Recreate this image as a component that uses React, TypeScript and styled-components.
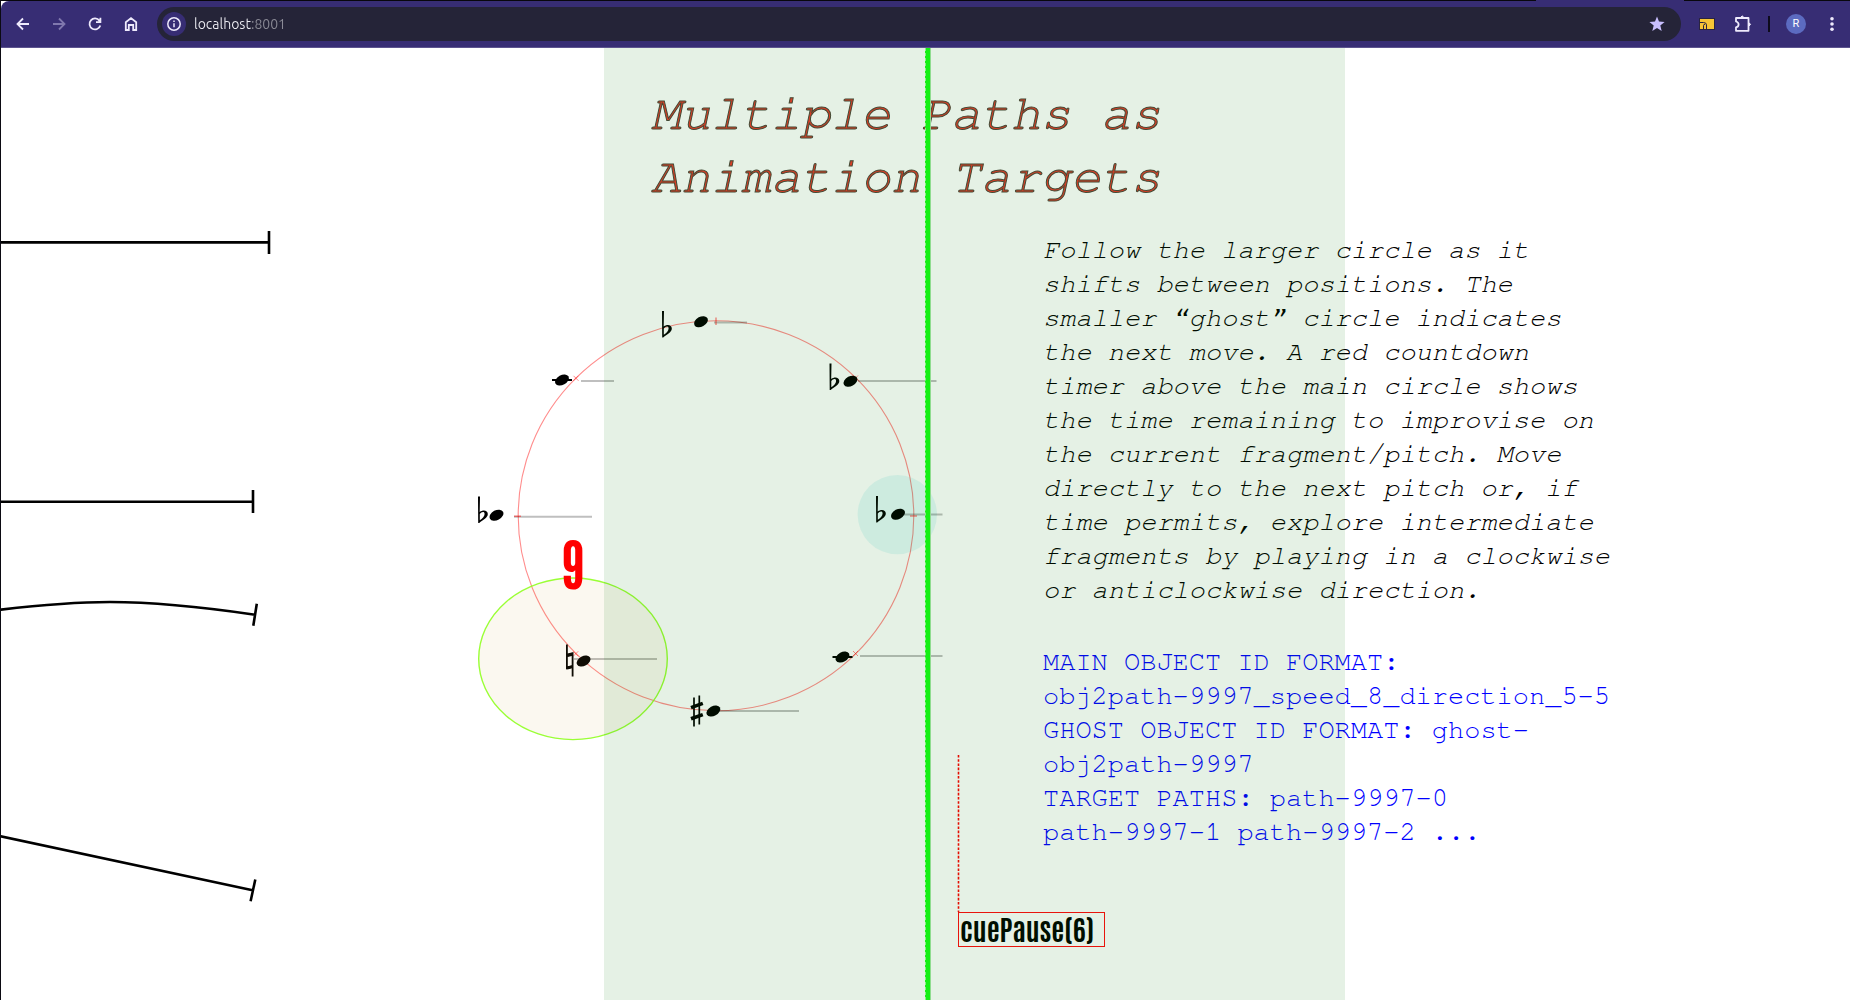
import React from "react";
import styled, { createGlobalStyle } from "styled-components";

const GlobalStyle = createGlobalStyle`
  * { box-sizing: border-box; }
  html, body, #root { height: 100%; }
  body { margin: 0; background: #fff; overflow: hidden; }
`;

const mono = `"Nimbus Mono PS", "FreeMono", "Courier Prime", "Courier 10 Pitch", "Cutive Mono", "Liberation Mono", "Courier New", monospace`;
const condensed = `"Antonio", "Anton", "Roboto Condensed", "DejaVu Sans Condensed", sans-serif`;
const digits = `"League Gothic", "Bebas Neue", "Antonio", "Anton", sans-serif`;

const Page = styled.div`
  display: flex;
  flex-direction: column;
  min-height: 100%;
  border-left: 1px solid #0b0a12;
`;

const TabStrip = styled.div`
  flex: none;
  height: 1px;
  background: linear-gradient(90deg, #08070d 83%, #372d74 83%, #372d74 91%, #08070d 91%);
`;

const Toolbar = styled.header`
  flex: none;
  display: flex;
  align-items: center;
  height: 47px;
  padding-left: 4px;
  background: #372d74;
  border-bottom: 1px solid #5d548f;
  border-top-left-radius: 8px;
`;

const IconButton = styled.button<{ $dim?: boolean }>`
  display: grid;
  place-items: center;
  flex: none;
  width: 36px;
  height: 36px;
  padding: 0;
  border: 0;
  background: none;
  color: ${(p) => (p.$dim ? "#8078ae" : "#eeeafc")};
`;

const AddressBar = styled.div`
  flex: 1;
  display: flex;
  align-items: center;
  gap: 8px;
  height: 34px;
  margin: 0 8px;
  padding: 0 6px 0 5px;
  border-radius: 17px;
  background: #252438;
`;

const InfoButton = styled(IconButton)`
  width: 24px;
  height: 24px;
  border-radius: 50%;
  background: #372d74;
`;

const StarButton = styled(IconButton)`
  color: #c9bfff;
`;

const Url = styled.input`
  flex: 1;
  min-width: 0;
  padding: 0;
  border: 0;
  outline: 0;
  font: 14px/24px Ubuntu, "Open Sans", "Noto Sans", sans-serif;
  color: transparent;
  background: linear-gradient(90deg, #eeeef4 58px, #8b8b96 58px);
  -webkit-background-clip: text;
  background-clip: text;
`;

const Divider = styled.span`
  flex: none;
  width: 2px;
  height: 16px;
  margin: 0 8px 0 7px;
  background: #0d0b1c;
`;

const Avatar = styled.span`
  display: grid;
  place-items: center;
  width: 20px;
  height: 20px;
  border-radius: 50%;
  background: #5c6bc0;
  color: #fff;
  font: 11px/20px Roboto, sans-serif;
`;

/* Score layers share one grid cell and are stacked in source order. */
const Stage = styled.main`
  flex: 1;
  position: relative;
  display: grid;
  overflow: hidden;
  > * { grid-area: 1 / 1; }
`;

const Drawing = styled.svg`
  display: block;
  width: 1849px;
  height: 952px;
`;

const Copy = styled.div`
  display: flex;
  flex-direction: column;
  padding-top: 35px;
`;

const Title = styled.h1`
  width: 560px;
  margin: 0 0 24px 650px;
  font: italic 400 50px/63px ${mono};
  color: #f0382a;
  -webkit-text-stroke: 1px #4b463c;
`;

const Paragraph = styled.p<{ $tone?: "note" }>`
  width: 600px;
  margin: 0 0 38px 1042px;
  font: ${(p) => (p.$tone ? "normal" : "italic")} 400 27px/34px ${mono};
  color: ${(p) => (p.$tone ? "#0000ff" : "#000")};
`;

const Band = styled.div`
  width: 741px;
  margin-left: 603px;
  background: rgba(4, 116, 4, 0.1);
  pointer-events: none;
`;

const Cue = styled.div`
  position: absolute;
  left: 957px;
  top: 864px;
  width: 147px;
  height: 35px;
  padding-left: 1px;
  border: 1px solid #e8140c;
  font: 700 28px/31px ${condensed};
  color: #000f00;
  white-space: nowrap;
`;

const Countdown = styled.output`
  position: absolute;
  left: 542px;
  top: 484px;
  width: 60px;
  text-align: center;
  font: 400 66px/66px ${digits};
  color: #ff0000;
`;

const Playhead = styled.div`
  position: absolute;
  top: 0;
  bottom: 0;
  left: 924px;
  width: 6px;
  background: #14f014;
  border-left: 1px dashed #8aee8a;
  border-right: 1px solid #8fdc8f;
`;

const Staff = ({ x1, x2, y }: { x1: number; x2: number; y: number }) => (
  <line x1={x1} x2={x2} y1={y} y2={y} stroke="#000" strokeOpacity={0.25} strokeWidth={2} />
);

const Head = ({ x, y, ledger }: { x: number; y: number; ledger?: boolean }) => (
  <g transform={`translate(${x} ${y})`}>
    <ellipse rx={7.4} ry={4.9} transform="rotate(-28)" />
    {ledger && <rect x={-10} y={-1} width={20} height={2} />}
  </g>
);

const Flat = ({ x, y }: { x: number; y: number }) => (
  <path
    transform={`translate(${x} ${y})`}
    fillRule="evenodd"
    d="M-1 0H1L.7 15.6C4 13 8.8 13.7 8.8 17.6C8.8 21.5 4 23.5 0.2 26.5H-.8ZM.8 17.6V23.8C3.2 22 5.6 20 5.6 17.4C5.6 14.8 2.4 15.2 .8 17.6Z"
  />
);

const Cross = ({ x, y }: { x: number; y: number }) => (
  <path
    d={`M${x - 2.5} ${y - 2.5}l5 5m0 -5l-5 5`}
    stroke="#ff0000"
    strokeOpacity={0.45}
    strokeWidth={1}
  />
);

const ScoreDrawing = () => (
  <Drawing viewBox="1 48 1849 952" aria-hidden="true">
    <g fill="none" stroke="#000" strokeWidth={2.6}>
      <path d="M0 242.4H269M269 231V254" />
      <path d="M0 501.8H253M253 490V513" />
      <path d="M0 609.7Q66 602 110 602Q168 602 255 614.7M256.8 603.7L253.3 625.8" />
      <path d="M0 836.2L252.6 890.2M255.3 879.4L250.6 901.3" />
    </g>
    <ellipse cx={716} cy={515.8} rx={197.8} ry={195} fill="none" stroke="#ff0000" strokeOpacity={0.45} strokeWidth={1.1} />
    <circle cx={897.3} cy={514.6} r={39.7} fill="#00c8c8" fillOpacity={0.1} />

    <Staff x1={714} x2={747} y={322.5} />
    <Staff x1={581} x2={614} y={381} />
    <Staff x1={514} x2={592} y={516.7} />
    <Staff x1={858} x2={936.5} y={381} />
    <Staff x1={904} x2={942.5} y={514.6} />
    <Staff x1={574} x2={657} y={659} />
    <Staff x1={720} x2={799} y={711} />
    <Staff x1={860} x2={942.5} y={656} />

    <Cross x={576} y={378.3} />
    <Cross x={575.7} y={653.8} />
    <Cross x={855.5} y={653.5} />
    <Cross x={855.5} y={378} />
    <g stroke="#ff0000" strokeOpacity={0.45} strokeWidth={1.5}>
      <path d="M716 317.5V325M514 516.3H521M910 516H917" />
    </g>

    <Flat x={663} y={311} />
    <Head x={701} y={321.7} />
    <Head x={562} y={380} ledger />
    <Flat x={479} y={496.5} />
    <Head x={496.5} y={515.2} />
    <Flat x={830.5} y={363.5} />
    <Head x={850.5} y={381.2} />
    <Flat x={877} y={496} />
    <Head x={898} y={514.2} />
    <Head x={583.6} y={661} />
    <Head x={713.4} y={711} />
    <Head x={842.5} y={657} ledger />

    <path
      fillRule="evenodd"
      d="M566 644.5H567.8V653.5L573.5 652V676.5H571.7V668L566 669.5ZM567.8 656.5V666.5L571.7 665.5V655.5Z"
    />
    <g stroke="#000">
      <path d="M567 655.6L572.6 654.2M567 668L572.6 666.6" strokeWidth={3} />
      <path d="M694 697.5V726.5M699.3 695.5V724.5" strokeWidth={1.7} />
      <path d="M691 707.6L702.8 703.4M691 718.8L702.8 714.6" strokeWidth={3.6} />
    </g>

    <ellipse cx={573} cy={658.8} rx={94.3} ry={80.8} fill="#d0a03a" fillOpacity={0.075} stroke="#8fff1f" strokeOpacity={0.9} strokeWidth={1.4} />
    <line x1={958.5} x2={958.5} y1={755} y2={912} stroke="#ff0000" strokeWidth={1.6} strokeDasharray="2.6 1.6" />
  </Drawing>
);

export default function App() {
  return (
    <>
      <GlobalStyle />
      <Page>
        <TabStrip />
        <Toolbar>
          <IconButton aria-label="Back">
            <svg width="16" height="16" viewBox="0 0 16 16" fill="none" stroke="currentColor" strokeWidth="1.8">
              <path d="M14 8H3M8 2.5L2.5 8L8 13.5" />
            </svg>
          </IconButton>
          <IconButton aria-label="Forward" $dim>
            <svg width="16" height="16" viewBox="0 0 16 16" fill="none" stroke="currentColor" strokeWidth="1.8">
              <path d="M2 8H13M8 2.5L13.5 8L8 13.5" />
            </svg>
          </IconButton>
          <IconButton aria-label="Reload">
            <svg width="16" height="16" viewBox="0 0 16 16" fill="none" stroke="currentColor" strokeWidth="1.8">
              <path d="M13.3 9.5A5.5 5.5 0 1 1 12.4 4.6L13.3 5.8M13.4 1.8V6.2H9" />
            </svg>
          </IconButton>
          <IconButton aria-label="Home">
            <svg width="16" height="16" viewBox="0 0 16 16" fill="none" stroke="currentColor" strokeWidth="1.8">
              <path d="M2.8 6.2L8 2.1L13.2 6.2V14H10.2V9H5.8V14H2.8Z" />
            </svg>
          </IconButton>
          <AddressBar>
            <InfoButton aria-label="View site information">
              <svg width="16" height="16" viewBox="0 0 16 16" fill="none" stroke="currentColor" strokeWidth="1.5">
                <circle cx="8" cy="8" r="6.2" />
                <path d="M8 7.2V11.2M8 4.6V6.1" />
              </svg>
            </InfoButton>
            <Url aria-label="Address" defaultValue="localhost:8001" spellCheck={false} />
            <StarButton aria-label="Bookmark this page">
              <svg width="16" height="16" viewBox="0 0 16 16" fill="currentColor">
                <path d="M8 .6L10 5.6L15.6 6L11.3 9.6L12.7 15L8 12.1L3.3 15L4.7 9.6L.4 6L6 5.6Z" />
              </svg>
            </StarButton>
          </AddressBar>
          <IconButton aria-label="Cast extension">
            <svg width="16" height="12" viewBox="0 0 16 12" fill="none">
              <rect x=".5" y=".5" width="15" height="11" fill="#f7c536" stroke="#2a2440" />
              <path d="M1 4.5H4.5Q7.5 4.5 7.5 7V11M4.5 11V7.5Q4.5 6.3 6 6.3" stroke="#2a2440" />
            </svg>
          </IconButton>
          <IconButton aria-label="Extensions">
            <svg width="18" height="18" viewBox="0 0 18 18" fill="none" stroke="currentColor" strokeWidth="1.8">
              <path d="M2 3H14.5V15.8H2V12.3Q4.6 11.6 4.6 9.4T2 6.5Z" strokeLinejoin="round" />
              <path d="M6.6 2.4Q8.2 -.6 9.8 2.4ZM15 7.8Q18 9.4 15 11Z" fill="currentColor" strokeWidth="1" />
            </svg>
          </IconButton>
          <Divider />
          <IconButton aria-label="Profile">
            <Avatar>R</Avatar>
          </IconButton>
          <IconButton aria-label="Menu">
            <svg width="16" height="16" viewBox="0 0 16 16" fill="currentColor">
              <circle cx="8" cy="2.8" r="1.8" />
              <circle cx="8" cy="8" r="1.8" />
              <circle cx="8" cy="13.2" r="1.8" />
            </svg>
          </IconButton>
        </Toolbar>
        <Stage>
          <ScoreDrawing />
          <Copy>
            <Title>
              Multiple Paths as
              <br />
              Animation Targets
            </Title>
            <Paragraph>
              Follow the larger circle as it
              <br />
              shifts between positions. The
              <br />
              smaller “ghost” circle indicates
              <br />
              the next move. A red countdown
              <br />
              timer above the main circle shows
              <br />
              the time remaining to improvise on
              <br />
              the current fragment/pitch. Move
              <br />
              directly to the next pitch or, if
              <br />
              time permits, explore intermediate
              <br />
              fragments by playing in a clockwise
              <br />
              or anticlockwise direction.
            </Paragraph>
            <Paragraph $tone="note">
              MAIN OBJECT ID FORMAT:
              <br />
              obj2path-9997_speed_8_direction_5-5
              <br />
              GHOST OBJECT ID FORMAT: ghost-
              <br />
              obj2path-9997
              <br />
              TARGET PATHS: path-9997-0
              <br />
              path-9997-1 path-9997-2 ...
            </Paragraph>
          </Copy>
          <Band />
          <Cue>cuePause(6)</Cue>
          <Countdown>9</Countdown>
          <Playhead />
        </Stage>
      </Page>
    </>
  );
}
